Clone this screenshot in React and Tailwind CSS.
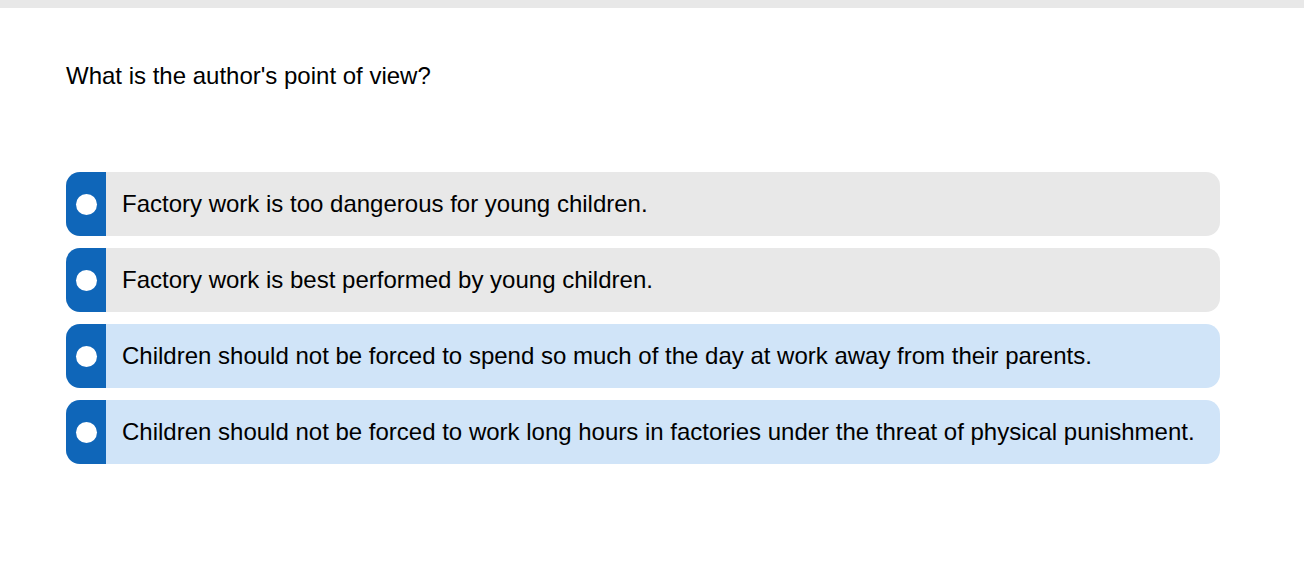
export default function App() {
  const opts = [
    { t: "Factory work is too dangerous for young children.", bg: "bg-[#e8e8e8]" },
    { t: "Factory work is best performed by young children.", bg: "bg-[#e8e8e8]" },
    { t: "Children should not be forced to spend so much of the day at work away from their parents.", bg: "bg-[#d0e4f8]" },
    { t: "Children should not be forced to work long hours in factories under the threat of physical punishment.", bg: "bg-[#d0e4f8]" },
  ];
  return (
    <div className="w-[1304px] h-[576px] bg-white text-black" style={{ fontFamily: '"Liberation Sans", Arial, sans-serif' }}>
      <div className="h-[8px] bg-[#e8e8e8]" />
      <div className="pl-[66px] pr-[84px]">
        <div className="pt-[53px] text-[24px] leading-[30px]">What is the author's point of view?</div>
        <div className="mt-[81px] flex flex-col gap-[12px]">
          {opts.map((o, i) => (
            <div key={i} className={`flex h-[64px] rounded-[14px] overflow-hidden ${o.bg}`}>
              <div className="w-[40px] bg-[#0f66b9] flex items-center justify-center shrink-0">
                <div className="w-[21px] h-[21px] rounded-full bg-white" />
              </div>
              <div className="flex items-center pl-[16px] text-[24px]">{o.t}</div>
            </div>
          ))}
        </div>
      </div>
    </div>
  );
}
